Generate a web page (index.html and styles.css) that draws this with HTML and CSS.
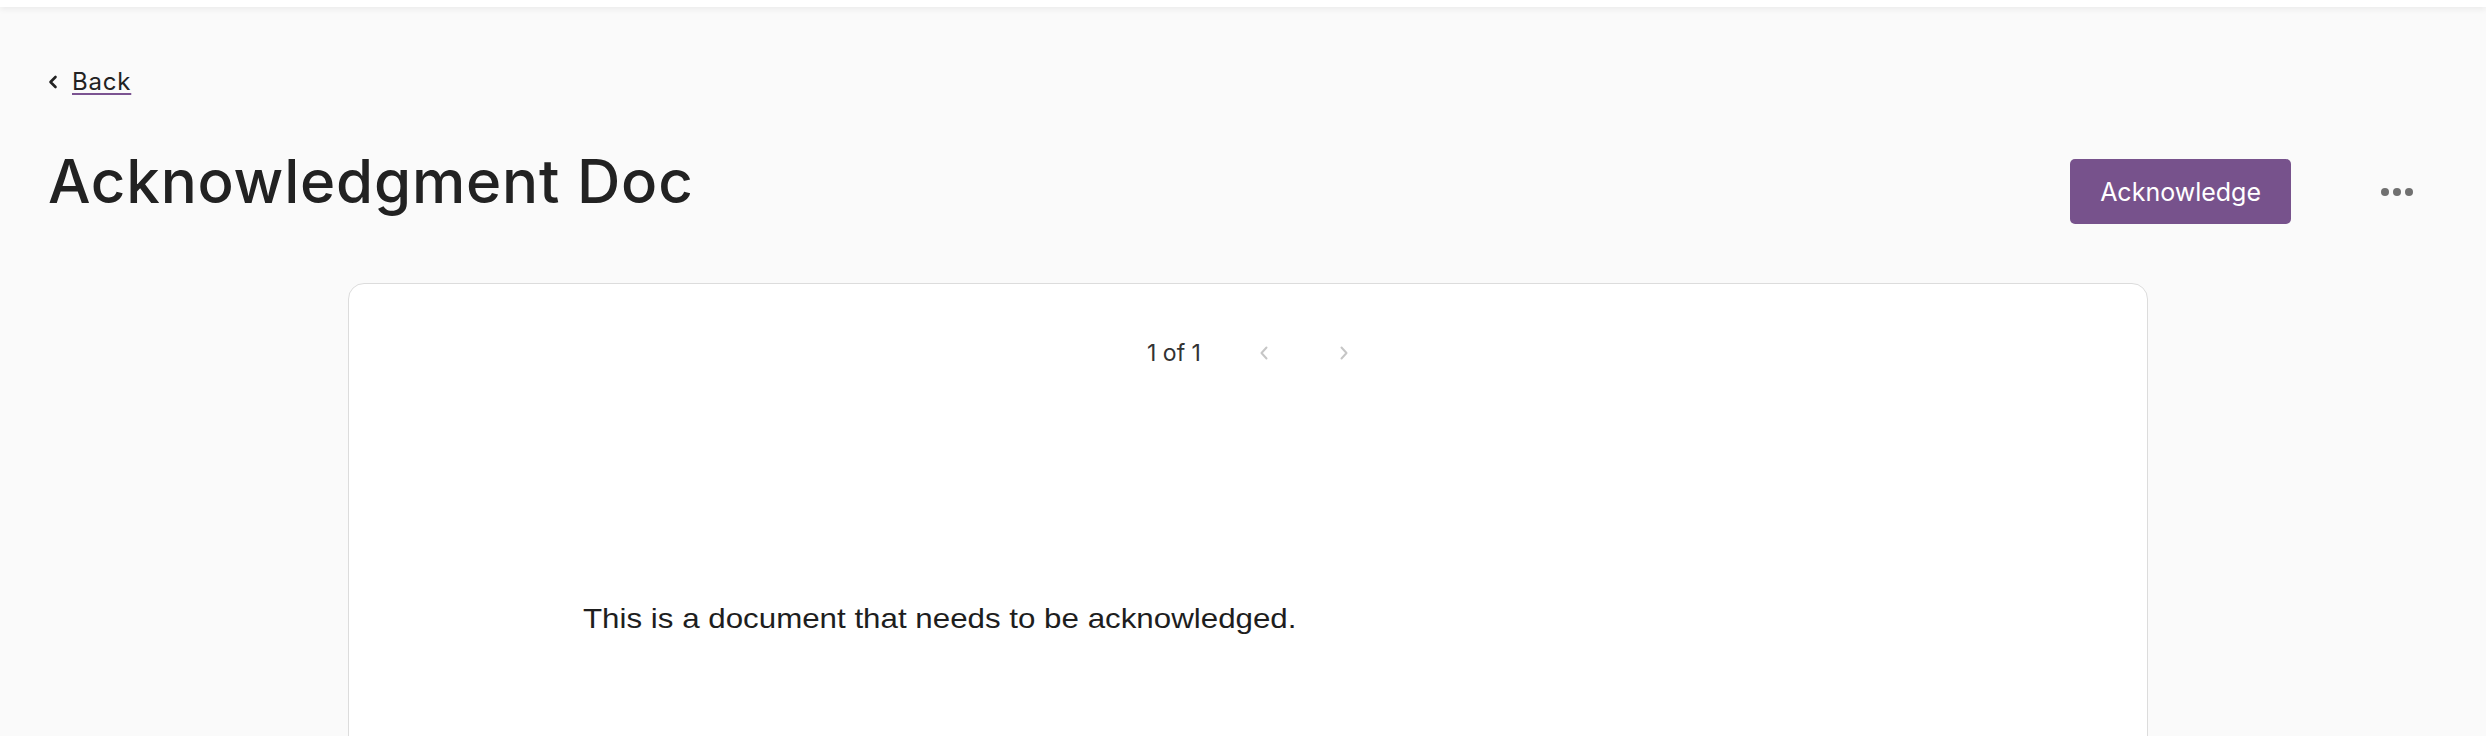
FILE: index.html
```html
<!DOCTYPE html>
<html lang="en">
<head>
<meta charset="utf-8">
<title>Acknowledgment Doc</title>
<link rel="stylesheet" href="styles.css">
</head>
<body>
<div class="topbar"></div>
<main class="page">
  <a class="back" href="#">
    <svg class="back-icon" width="10" height="14" viewBox="0 0 10 14"><polyline points="7.5,2 2.5,7 7.5,12" fill="none" stroke="#222" stroke-width="2.6" stroke-linecap="round" stroke-linejoin="round"/></svg>
    <span class="back-text">Back</span>
  </a>
  <div class="head">
    <h1 class="title">Acknowledgment Doc</h1>
    <div class="actions">
      <button class="ack">Acknowledge</button>
      <button class="more" aria-label="More">
        <svg width="32" height="8" viewBox="0 0 32 8"><circle cx="4" cy="4" r="4" fill="#707070"/><circle cx="16" cy="4" r="4" fill="#707070"/><circle cx="28" cy="4" r="4" fill="#707070"/></svg>
      </button>
    </div>
  </div>
  <section class="card">
    <div class="pager">
      <span class="pager-text">1 of 1</span>
      <button class="pager-btn prev" aria-label="Previous page">
        <svg width="8" height="14" viewBox="0 0 8 14"><polyline points="6.5,1.5 1.5,7 6.5,12.5" fill="none" stroke="#c6c6c6" stroke-width="2" stroke-linecap="round" stroke-linejoin="round"/></svg>
      </button>
      <button class="pager-btn next" aria-label="Next page">
        <svg width="8" height="14" viewBox="0 0 8 14"><polyline points="1.5,1.5 6.5,7 1.5,12.5" fill="none" stroke="#c6c6c6" stroke-width="2" stroke-linecap="round" stroke-linejoin="round"/></svg>
      </button>
    </div>
    <div class="doc">
      <p class="doc-text">This is a document that needs to be acknowledged.</p>
    </div>
  </section>
</main>
</body>
</html>
```

FILE: styles.css
```css
html, body {
  margin: 0;
  padding: 0;
}
body {
  background: #fafafa;
  font-family: Inter, "Liberation Sans", sans-serif;
  color: #222;
  overflow: hidden;
}
.topbar {
  height: 7px;
  background: #fff;
  box-shadow: 0 2px 6px rgba(0, 0, 0, 0.07);
}
.page {
  padding: 0 73px 0 48px;
}
.back {
  display: inline-flex;
  align-items: center;
  margin-top: 60px;
  color: #222;
  text-decoration: none;
  font-size: 24px;
  line-height: 29px;
  letter-spacing: 0.8px;
}
.back-icon {
  margin-right: 14px;
  margin-top: 1px;
}
.back-text {
  text-decoration: underline;
  text-decoration-color: #7b5391;
  text-decoration-thickness: 2px;
  text-underline-offset: 3px;
}
.head {
  display: flex;
  justify-content: space-between;
  align-items: flex-start;
  margin-top: 50px;
}
.title {
  margin: 0;
  font-size: 60px;
  line-height: 71px;
  font-weight: 500;
  letter-spacing: 0.8px;
  color: #222;
}
.actions {
  display: flex;
  align-items: center;
  margin-top: 13px;
}
.ack {
  height: 65px;
  padding: 0 30px;
  border: none;
  border-radius: 5px;
  background: #77528c;
  color: #fff;
  font-family: Inter, "Liberation Sans", sans-serif;
  font-size: 25px;
  font-weight: 400;
}
.more {
  display: flex;
  align-items: center;
  justify-content: center;
  width: 32px;
  padding: 0;
  margin-left: 90px;
  border: none;
  background: transparent;
}
.card {
  box-sizing: border-box;
  width: 1800px;
  min-height: 520px;
  margin: 59px 0 0 300px;
  background: #fff;
  border: 1px solid #dcdcdc;
  border-radius: 16px;
}
.pager {
  display: flex;
  justify-content: center;
  align-items: center;
  padding: 55px 0 0 15px;
}
.pager-text {
  font-size: 23px;
  line-height: 28px;
  color: #333;
  margin-right: 43px;
}
.pager-btn {
  display: flex;
  align-items: center;
  justify-content: center;
  width: 40px;
  height: 28px;
  padding: 0;
  border: none;
  background: transparent;
}
.pager-btn.next {
  margin-left: 40px;
}
.doc {
  padding: 236px 0 0 234px;
}
.doc-text {
  margin: 0;
  font-family: "Liberation Sans", Arial, sans-serif;
  font-size: 28px;
  line-height: 32px;
  color: #1e1e1e;
  transform: scaleX(1.118);
  transform-origin: left center;
}
```
